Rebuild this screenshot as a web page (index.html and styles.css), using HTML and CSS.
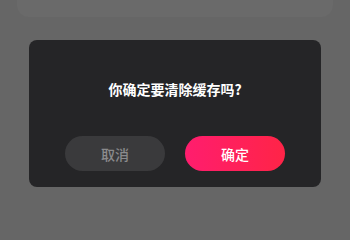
FILE: index.html
```html
<!DOCTYPE html>
<html lang="zh">
<head>
<meta charset="utf-8">
<link rel="stylesheet" href="styles.css">
</head>
<body>
<div class="screen">
  <div class="top-card"></div>
  <div class="dialog">
    <div class="title">你确定要清除缓存吗?</div>
    <div class="actions">
      <button class="btn cancel">取消</button>
      <button class="btn confirm">确定</button>
    </div>
  </div>
</div>
</body>
</html>
```
FILE: styles.css
```css
html, body {
  margin: 0;
  padding: 0;
  background: #666666;
  font-family: "Noto Sans CJK SC", "Noto Sans", sans-serif;
}
.screen {
  width: 350px;
  height: 222px;
  display: flex;
  flex-direction: column;
  overflow: hidden;
}
.top-card {
  height: 17px;
  margin: 0 17px;
  background: #6a6a6a;
  border-radius: 0 0 12px 12px;
}
.dialog {
  margin: 23px 0 0 29px;
  width: 292px;
  height: 147px;
  box-sizing: border-box;
  background: #252527;
  border-radius: 8px;
  padding: 39px 0 16px;
  display: flex;
  flex-direction: column;
  align-items: center;
}
.title {
  color: #ffffff;
  font-size: 14px;
  font-weight: 700;
  line-height: 20px;
  height: 20px;
}
.actions {
  margin-top: 37px;
  display: flex;
  gap: 20px;
}
.btn {
  width: 100px;
  height: 35px;
  border: none;
  border-radius: 18px;
  font-family: inherit;
  font-size: 14px;
  font-weight: 500;
  padding: 0;
}
.cancel {
  background: #3a3a3c;
  color: #8a8a8c;
}
.confirm {
  background: linear-gradient(90deg, #ff1d6e 0%, #ff2447 100%);
  color: #ffffff;
}
```
